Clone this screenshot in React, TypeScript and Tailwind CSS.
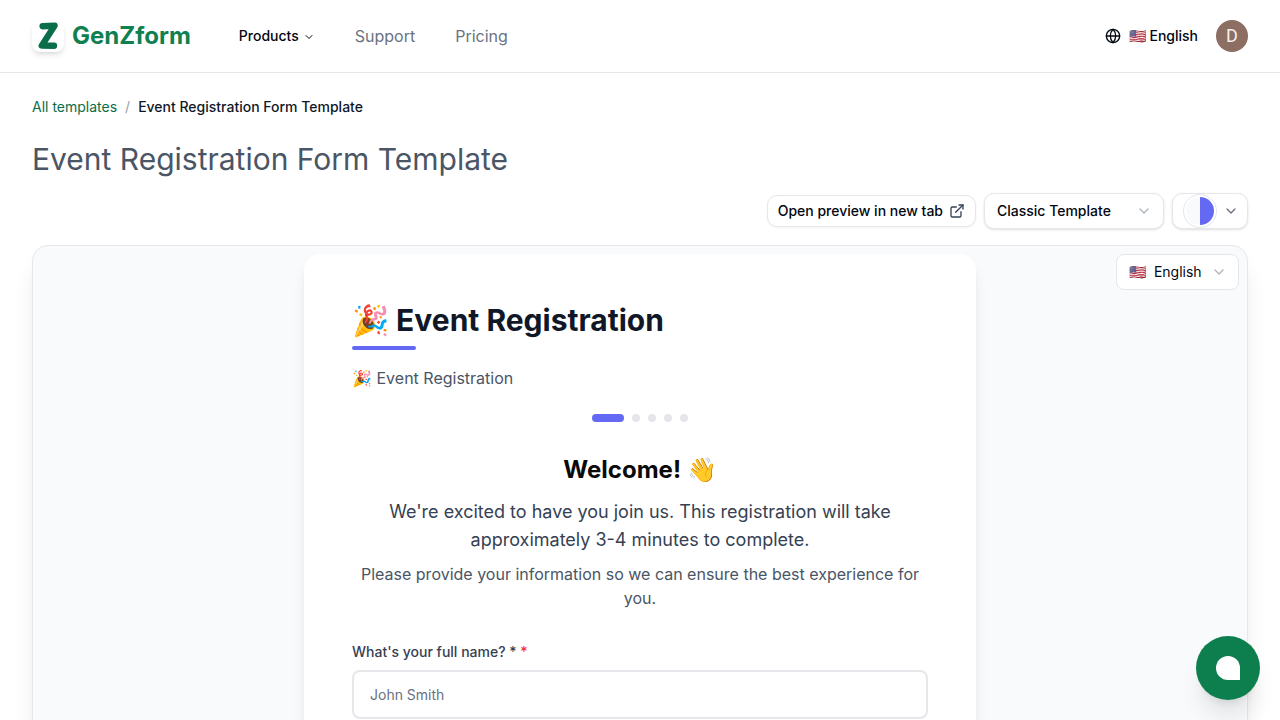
import React, { useState } from 'react';
import { ChevronDown, ExternalLink, Globe } from 'lucide-react';

const TOTAL_STEPS = 5;

const Logo: React.FC = () => (
  <a href="#" className="flex items-center gap-2">
    <span className="flex h-8 w-8 items-center justify-center rounded-lg bg-white shadow-md">
      <svg viewBox="0 0 32 32" className="h-8 w-8" fill="none" aria-hidden="true">
        <path
          d="M10.6 6.2 L22.6 5.6 L9.8 25.6 L22 25.8"
          stroke="#0b6e4a"
          strokeWidth="6.4"
          strokeLinecap="round"
          strokeLinejoin="round"
        />
      </svg>
    </span>
    <span className="text-2xl font-bold text-[#0f8050]">GenZform</span>
  </a>
);

const Header: React.FC = () => (
  <header className="flex items-center justify-between border-b border-gray-200 bg-white px-8 py-5">
    <div className="flex items-center gap-12">
      <Logo />
      <nav className="flex items-center gap-10">
        <button type="button" className="flex items-center gap-1 text-sm font-medium text-gray-950">
          Products
          <ChevronDown className="mt-0.5 h-3 w-3" />
        </button>
        <a href="#support" className="text-base text-gray-500">Support</a>
        <a href="#pricing" className="text-base text-gray-500">Pricing</a>
      </nav>
    </div>
    <div className="flex items-center gap-[18px]">
      <button type="button" className="flex items-center gap-2 text-sm font-medium text-gray-950">
        <Globe className="h-4 w-4" />
        <span>🇺🇸 English</span>
      </button>
      <button type="button" className="h-8 w-8 rounded-full bg-[#8d6e63] font-[Roboto] text-lg font-normal text-white/90">
        D
      </button>
    </div>
  </header>
);

const Toolbar: React.FC = () => {
  const [template, setTemplate] = useState('classic');

  return (
    <div className="mt-4 flex items-center justify-end gap-2">
      <a
        href="#preview"
        className="flex h-8 items-center gap-1.5 rounded-[10px] border border-gray-200 bg-white px-2.5 text-sm font-medium text-gray-950 shadow-xs"
      >
        Open preview in new tab
        <ExternalLink className="h-4 w-4 text-gray-700" />
      </a>
      <div className="relative">
        <select
          aria-label="Template"
          value={template}
          onChange={e => setTemplate(e.target.value)}
          className="h-9 w-[180px] appearance-none rounded-[10px] border border-gray-200 bg-white px-3 text-sm font-medium text-gray-950 shadow-sm"
        >
          <option value="classic">Classic Template</option>
          <option value="modern">Modern Template</option>
        </select>
        <ChevronDown className="pointer-events-none absolute top-2.5 right-3 h-4 w-4 text-gray-400 opacity-80" />
      </div>
      <button
        type="button"
        aria-label="Color theme"
        className="flex h-9 items-center gap-1.5 rounded-[10px] border border-gray-200 bg-white pr-2 pl-2.5 shadow-sm"
      >
        <span className="flex h-[34px] w-[34px] items-center justify-center rounded-full border border-gray-200">
          <span className="flex h-7 w-7 overflow-hidden rounded-full">
            <span className="flex-1 bg-gray-50" />
            <span className="w-[14px] bg-[#6469f3]" />
          </span>
        </span>
        <ChevronDown className="h-4 w-4 text-gray-500" />
      </button>
    </div>
  );
};

const Steps: React.FC<{ current: number }> = ({ current }) => (
  <div className="mt-6 flex justify-center gap-2">
    {Array.from({ length: TOTAL_STEPS }, (_, i) => (
      <span
        key={i}
        className={i === current ? 'h-2 w-8 rounded-full bg-[#6469f3]' : 'h-2 w-2 rounded-full bg-gray-200'}
      />
    ))}
  </div>
);

const RegistrationForm: React.FC = () => {
  const [name, setName] = useState('');

  return (
    <form className="mx-auto max-w-2xl rounded-2xl bg-white p-12 shadow-lg" onSubmit={e => e.preventDefault()}>
      <h2 className="text-3xl font-bold text-gray-900">🎉 Event Registration</h2>
      <div className="mt-2 h-1 w-16 rounded-full bg-[#6469f3]" />
      <p className="mt-4 text-base text-gray-600">🎉 Event Registration</p>

      <Steps current={0} />

      <div className="mt-8 text-center">
        <h3 className="text-2xl font-bold text-neutral-950">Welcome! 👋</h3>
        <p className="mt-3 text-lg text-gray-700">
          We're excited to have you join us. This registration will take approximately 3-4 minutes to complete.
        </p>
        <p className="mt-2 text-base text-gray-600">
          Please provide your information so we can ensure the best experience for you.
        </p>
      </div>

      <div className="mt-8">
        <label htmlFor="full-name" className="block text-sm font-medium text-gray-700">
          What's your full name? * <span className="text-red-500">*</span>
        </label>
        <input
          id="full-name"
          type="text"
          placeholder="John Smith"
          value={name}
          onChange={e => setName(e.target.value)}
          className="mt-2 h-[49px] w-full rounded-lg border-2 border-gray-200 px-4 text-sm placeholder:text-gray-500"
        />
      </div>
    </form>
  );
};

const App: React.FC = () => {
  const [language, setLanguage] = useState('en');

  return (
    <div className="min-h-screen bg-white font-[Inter,sans-serif]">
      <Header />

      <main className="px-8 pt-6">
        <nav aria-label="Breadcrumb" className="flex gap-2 text-sm">
          <a href="#templates" className="text-[#0b6e4a]">All templates</a>
          <span className="text-gray-400">/</span>
          <span className="font-medium text-gray-900">Event Registration Form Template</span>
        </nav>
        <h1 className="mt-6 text-3xl text-gray-600">Event Registration Form Template</h1>

        <Toolbar />

        <section className="relative mt-4 rounded-2xl border border-gray-200 bg-gray-50 p-2 shadow-xl">
          <RegistrationForm />
          <div className="absolute top-2 right-2">
            <select
              aria-label="Form language"
              value={language}
              onChange={e => setLanguage(e.target.value)}
              className="h-9 w-[123px] appearance-none rounded-lg border border-gray-200 bg-white px-3 text-sm text-gray-950"
            >
              <option value="en">🇺🇸&nbsp; English</option>
              <option value="es">🇪🇸&nbsp; Español</option>
            </select>
            <ChevronDown className="pointer-events-none absolute top-2.5 right-3 h-4 w-4 text-gray-400 opacity-80" />
          </div>
        </section>
      </main>

      <button
        type="button"
        aria-label="Open chat"
        className="fixed right-5 bottom-5 flex h-16 w-16 items-center justify-center rounded-full bg-[#0d7f4f] shadow-xl"
      >
        <span className="h-6 w-6 rounded-full rounded-br-none bg-white" />
      </button>
    </div>
  );
};

export default App;
